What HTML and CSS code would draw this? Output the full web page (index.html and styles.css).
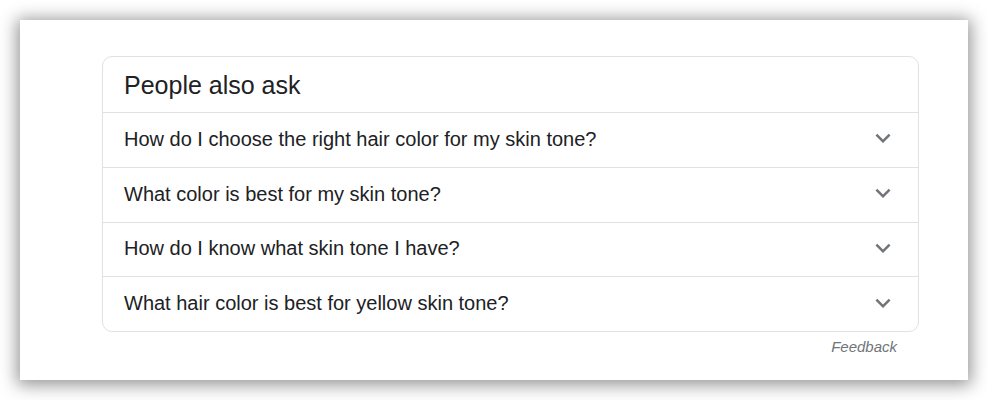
FILE: index.html
```html
<!DOCTYPE html>
<html lang="en">
<head>
    <meta charset="UTF-8">
    <meta name="viewport" content="width=device-width, initial-scale=1.0">
    <title>People also ask</title>
    <link rel="stylesheet" href="styles.css">
</head>
<body>
    <div class="panel">
        <div class="paa">
            <div class="paa-title">People also ask</div>
            <div class="question">
                <span>How do I choose the right hair color for my skin tone?</span>
                <svg class="chevron" viewBox="0 0 24 24"><path d="M16.59 8.59L12 13.17 7.41 8.59 6 10l6 6 6-6z"/></svg>
            </div>
            <div class="question">
                <span>What color is best for my skin tone?</span>
                <svg class="chevron" viewBox="0 0 24 24"><path d="M16.59 8.59L12 13.17 7.41 8.59 6 10l6 6 6-6z"/></svg>
            </div>
            <div class="question">
                <span>How do I know what skin tone I have?</span>
                <svg class="chevron" viewBox="0 0 24 24"><path d="M16.59 8.59L12 13.17 7.41 8.59 6 10l6 6 6-6z"/></svg>
            </div>
            <div class="question">
                <span>What hair color is best for yellow skin tone?</span>
                <svg class="chevron" viewBox="0 0 24 24"><path d="M16.59 8.59L12 13.17 7.41 8.59 6 10l6 6 6-6z"/></svg>
            </div>
        </div>
        <div class="feedback">Feedback</div>
    </div>
</body>
</html>
```

FILE: styles.css
```css
:root {
    --text-color: #202124;
    --muted-color: #70757a;
    --line-color: #dfe1e5;
}

html {
    background: #ffffff;
}

body {
    margin: 0;
    padding: 20px;
    font-family: Arial, "Liberation Sans", sans-serif;
    color: var(--text-color);
}

.panel {
    position: relative;
    width: 948px;
    height: 360px;
    box-sizing: border-box;
    padding: 36px 49px 0 82px;
    background: #ffffff;
    box-shadow: 0 2px 16px 3px rgba(0, 0, 0, 0.42);
}

.paa {
    border: 1px solid var(--line-color);
    border-radius: 10px;
}

.paa-title {
    height: 55px;
    display: flex;
    align-items: center;
    padding: 0 20px 0 21px;
    font-size: 25px;
    line-height: 30px;
}

.question {
    height: 53.75px;
    display: flex;
    align-items: center;
    justify-content: space-between;
    padding: 0 20px 0 21px;
    border-top: 1px solid var(--line-color);
    font-size: 20px;
    line-height: 26px;
}

.question span {
    margin-top: -2px;
}

.chevron {
    width: 30px;
    height: 30px;
    margin-top: -3px;
    fill: var(--muted-color);
}

.feedback {
    margin-top: 5px;
    padding-right: 22px;
    text-align: right;
    font-size: 15px;
    line-height: 20px;
    font-style: italic;
    color: var(--muted-color);
}
```
